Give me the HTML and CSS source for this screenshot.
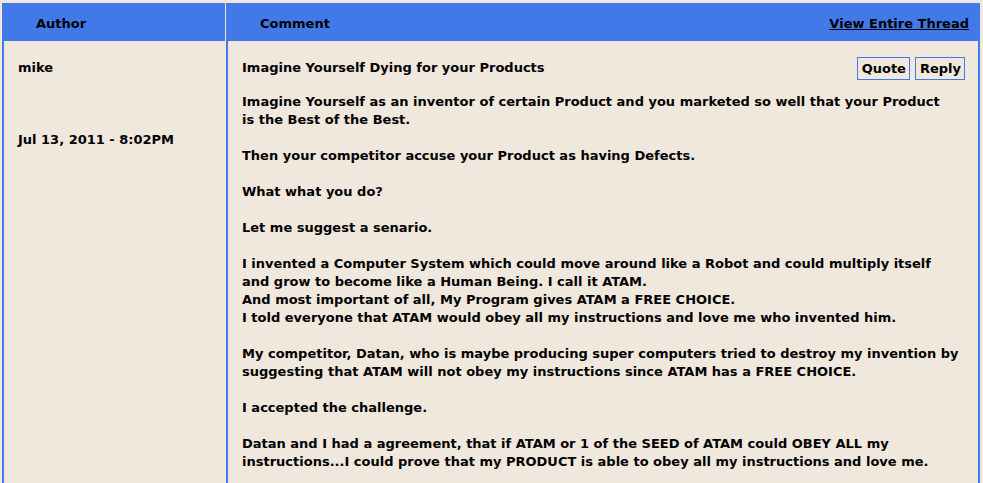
FILE: index.html
```html
<!DOCTYPE html>
<html lang="en">
<head>
<meta charset="UTF-8">
<title>Imagine Yourself Dying for your Products</title>
<link rel="stylesheet" href="styles.css">
</head>
<body>
<div class="thread">
    <div class="thread-head">
        <div class="head-author">Author</div>
        <div class="head-comment">
            <span>Comment</span>
            <a href="#thread" class="view-thread">View Entire Thread</a>
        </div>
    </div>
    <div class="post">
        <div class="post-author">
            <div class="author-name">mike</div>
            <div class="post-date">Jul 13, 2011 - 8:02PM</div>
        </div>
        <div class="post-body">
            <div class="post-title-row">
                <span class="post-title">Imagine Yourself Dying for your Products</span>
                <div class="post-actions">
                    <a href="#quote" class="post-btn">Quote</a>
                    <a href="#reply" class="post-btn">Reply</a>
                </div>
            </div>
            <p>Imagine Yourself as an inventor of certain Product and you marketed so well that your Product<br>
            is the Best of the Best.</p>
            <p>Then your competitor accuse your Product as having Defects.</p>
            <p>What what you do?</p>
            <p>Let me suggest a senario.</p>
            <p>I invented a Computer System which could move around like a Robot and could multiply itself<br>
            and grow to become like a Human Being. I call it ATAM.<br>
            And most important of all, My Program gives ATAM a FREE CHOICE.<br>
            I told everyone that ATAM would obey all my instructions and love me who invented him.</p>
            <p>My competitor, Datan, who is maybe producing super computers tried to destroy my invention by<br>
            suggesting that ATAM will not obey my instructions since ATAM has a FREE CHOICE.</p>
            <p>I accepted the challenge.</p>
            <p>Datan and I had a agreement, that if ATAM or 1 of the SEED of ATAM could OBEY ALL my<br>
            instructions...I could prove that my PRODUCT is able to obey all my instructions and love me.</p>
        </div>
    </div>
</div>
</body>
</html>
```

FILE: styles.css
```css
:root {
    --blue: #4279e9;
    --tan: #f0e8dc;
    --text: #000;
}
body {
    margin: 0;
    background-color: var(--tan);
    color: var(--text);
    font-family: 'DejaVu Sans', Verdana, sans-serif;
    font-size: 13px;
    font-weight: 700;
    line-height: 18px;
}
.thread {
    width: 978px;
    margin: 3px 0 0 2px;
}
.thread-head {
    display: flex;
    height: 38px;
    background-color: var(--blue);
}
.head-author {
    width: 224px;
    box-sizing: border-box;
    padding: 4px 0 0 34px;
    border-right: 1px solid var(--tan);
    display: flex;
    align-items: center;
}
.head-comment {
    flex: 1;
    display: flex;
    align-items: center;
    justify-content: space-between;
    padding: 4px 11px 0 34px;
}
.view-thread {
    color: var(--text);
    text-decoration: underline;
}
.post {
    display: flex;
    border-left: 2px solid var(--blue);
    border-right: 2px solid var(--blue);
}
.post-author {
    width: 222px;
    box-sizing: border-box;
    padding: 18px 14px;
}
.author-name {
    margin-bottom: 54px;
}
.post-body {
    flex: 1;
    border-left: 2px solid var(--blue);
    padding: 16px 13px 0 14px;
}
.post-title-row {
    display: flex;
    align-items: flex-start;
    justify-content: space-between;
    height: 23px;
    margin-bottom: 13px;
}
.post-title {
    padding-top: 2px;
}
.post-actions {
    display: flex;
    gap: 5px;
}
.post-btn {
    display: block;
    border: 1px solid var(--blue);
    padding: 2px 3px 1px 4px;
    color: var(--text);
    text-decoration: none;
}
.post-body p {
    margin: 0 0 18px;
}
```
